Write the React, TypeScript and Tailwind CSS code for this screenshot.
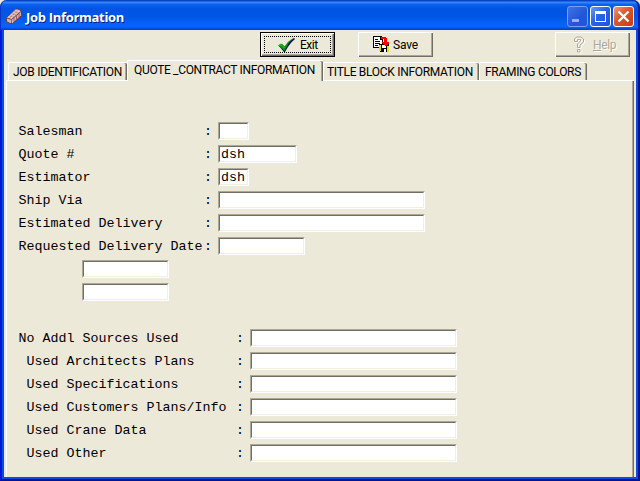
import React from "react";

const bevel =
  "bg-[#ece9d8] shadow-[inset_1px_1px_0_#fff,inset_-1px_-1px_0_#716f64,inset_-2px_-2px_0_#aca899]";

function Field({ width, value = "" }: { width: string; value?: string }) {
  return (
    <div
      className={`${width} h-[18px] shrink-0 border border-t-[#aca899] border-l-[#aca899] border-r-white border-b-white`}
    >
      <div className="h-full border border-t-[#716f64] border-l-[#716f64] border-r-[#f1efe2] border-b-[#f1efe2] bg-white pl-px leading-[15px] whitespace-pre">
        {value}
      </div>
    </div>
  );
}

function Row({ label, labelWidth, width, value }: { label: string; labelWidth: string; width: string; value?: string }) {
  return (
    <div className="flex h-[23px] items-start">
      <div className={`flex ${labelWidth} shrink-0 justify-between pr-[6px] pl-[0.5px] leading-[19px] whitespace-pre`}>
        <span>{label}</span>
        <span>:</span>
      </div>
      <Field width={width} value={value} />
    </div>
  );
}

function Brick() {
  return (
    <svg width="17" height="17" viewBox="0 0 17 17">
      <path d="M.5 9.5L9.5 1H12L15.5 3V7.5L6.5 15.5H4L.5 13.5Z" fill="#cdb6b4" stroke="#6d3a3c" />
      <path d="M1 10L5.5 11.5L15 3.5" stroke="#8c3a3a" fill="none" />
      <path d="M5.5 11.5V15M8 9.5V13.5M10.5 7.5V11.5M13 5.5V9.5M3.5 7.5L7.5 9M6 5.5L10 7M8.5 3.5L12.5 5" stroke="#a0504f" strokeWidth=".9" fill="none" />
      <path d="M2.5 9.2L11 1.9M4.8 10L13.5 2.6" stroke="#eadcda" strokeWidth=".8" fill="none" />
    </svg>
  );
}

function Check() {
  return (
    <svg width="17" height="16" viewBox="0 0 17 16">
      <path d="M1 9L4 7L7 10Q10 5 16 1L17 2Q11 7 7 15H6Z" fill="#000060" />
      <path d="M0 8.5L3 6.5L6.5 9.5Q10 4 15.5 .5Q10 6 6.5 14Z" fill="#009a00" />
      <path d="M1.5 8.5L3 7.5L6.5 11" stroke="#35d435" fill="none" />
    </svg>
  );
}

function SaveIcon() {
  return (
    <svg width="17" height="17" viewBox="0 0 17 17" shapeRendering="crispEdges">
      <path d="M0 0H8L10 2V12H0Z" fill="#000" />
      <path d="M1 1H7V4H9V11H1Z" fill="#fff" />
      <path d="M2 3H5M2 5H7M2 7H7M2 9H5" transform="translate(0 .5)" stroke="#000" />
      <path d="M6 8H16V16H7L6 15Z" fill="#000" />
      <path d="M6 9H8V15H6ZM14 10H16V16H14Z" fill="#e8d820" />
      <path d="M9 9H13V12H9ZM11 13H13V16H11Z" fill="#fff" />
      <path d="M8 1H12L14 3V6H16V7L13 10H12L9 7V6H11V4L10 3H8Z" fill="#f00" />
    </svg>
  );
}

function HelpIcon() {
  return (
    <svg width="13" height="18" viewBox="0 0 13 18" fill="none">
      <g transform="translate(1 1)" stroke="#fff">
        <path d="M1.5 5V3L3.5 1H8L10.5 3V6L7 9V11.5H4.5V8L7.5 5V3.5H4.5V5.5H1.5ZM4.5 13.5H7V16H4.5Z" />
      </g>
      <path d="M1.5 5V3L3.5 1H8L10.5 3V6L7 9V11.5H4.5V8L7.5 5V3.5H4.5V5.5H1.5ZM4.5 13.5H7V16H4.5Z" stroke="#aca899" />
    </svg>
  );
}

function CaptionButton({ kind }: { kind: "min" | "max" | "close" }) {
  const look = {
    min: "border-[#7f9df0] bg-[linear-gradient(135deg,#3f74e6,#2055d8_60%,#2458d6)]",
    max: "border-white bg-[linear-gradient(135deg,#6b9af5,#2764e6_45%,#1b54dc)]",
    close: "border-white bg-[linear-gradient(135deg,#f0987c,#e0532c_45%,#cc3a12)]",
  }[kind];
  return (
    <div className={`h-[21px] w-[21px] rounded-[3px] border ${look}`}>
      <svg width="19" height="19" viewBox="0 0 19 19" fill="none" className="block">
        {kind === "min" && <path d="M4 12H11V15H4Z" fill="#95aff0" />}
        {kind === "max" && <path d="M4 4H15V15H4ZM5 7V14H14V7Z" fill="#fff" fillRule="evenodd" />}
        {kind === "close" && <path d="M4.5 4.5L14.5 14.5M14.5 4.5L4.5 14.5" stroke="#fff" strokeWidth="2.3" />}
      </svg>
    </div>
  );
}

function Tab({ label, width, text }: { label: string; width: string; text: string }) {
  return (
    <div
      className={`${width} h-[18px] shrink-0 rounded-t-[2px] border-t border-l border-white bg-[#ece9d8] leading-[18px] whitespace-nowrap shadow-[inset_-1px_0_0_#716f64,inset_-2px_0_0_#aca899]`}
    >
      <span className={text}>{label}</span>
    </div>
  );
}

export default function App() {
  return (
    <div className="flex h-[481px] w-[640px] flex-col overflow-hidden bg-[#ece9d8] font-['Roboto','Liberation_Sans',sans-serif] text-[12px] text-black">
      <header className="flex h-[30px] shrink-0 items-center rounded-t-[7px] bg-[linear-gradient(180deg,#0842c4_0,#0842c4_3%,#3a8bfa_7%,#0b62ee_15%,#0054e3_28%,#0055e5_55%,#0563fa_80%,#0363fb_90%,#0049d2_97%,#003dc0_100%)] pt-[2px] pr-[6px] pl-[6px] shadow-[inset_1px_0_0_#0831c6,inset_-2px_0_0_#0021a8]">
        <Brick />
        <span className="ml-[3px] w-[400px] pt-[2px] font-['Open_Sans','Noto_Sans',sans-serif] text-[13px] leading-[20px] font-bold tracking-[-0.3px] text-white [text-shadow:1px_1px_0_#0a1f80]">
          Job Information
        </span>
        <div className="ml-auto flex gap-[2px] pt-[1px]">
          <CaptionButton kind="min" />
          <CaptionButton kind="max" />
          <CaptionButton kind="close" />
        </div>
      </header>

      <div className="h-[451px] border-x-2 border-b-2 border-l-[#0019cf] border-r-[#00138c] border-b-[#00138c]">
        <div className="flex h-full flex-col border-x-2 border-b-2 border-[#0a4be6]">
          <div className="flex h-[30px] shrink-0 pt-[2px] text-[12px]">
            <button className="ml-[256px] h-[25px] w-[75px] bg-black p-px">
              <div className={`h-full w-full p-[3px] ${bevel}`}>
                <div className="flex h-full items-center border border-dotted border-black pl-[13px]">
                  <Check />
                  <span className="ml-[5px] tracking-[-0.5px]">Exit</span>
                </div>
              </div>
            </button>
            <button className={`ml-[23px] flex h-[25px] w-[75px] items-center pl-[15px] ${bevel}`}>
              <SaveIcon />
              <span className="ml-[3px] tracking-[-0.2px]">Save</span>
            </button>
            <button className={`ml-[122px] flex h-[25px] w-[75px] items-center pl-[18px] text-[#aca899] [text-shadow:1px_1px_0_#fff] ${bevel}`}>
              <HelpIcon />
              <span className="ml-[7px] tracking-[-0.4px]">
                <u>H</u>elp
              </span>
            </button>
          </div>

          <nav className="flex h-[20px] shrink-0 items-end pl-[4px]">
            <Tab label="JOB IDENTIFICATION" width="w-[119px]" text="pl-[4px] tracking-[-0.28px]" />
            <div className="z-10 -mb-px h-[21px] w-[196px] shrink-0 rounded-t-[2px] border-t border-l border-white bg-[#ece9d8] pl-[6px] leading-[19px] tracking-[-0.33px] whitespace-nowrap shadow-[inset_-1px_0_0_#716f64,inset_-2px_0_0_#aca899]">
              QUOTE _CONTRACT INFORMATION
            </div>
            <Tab label="TITLE BLOCK INFORMATION" width="w-[156px]" text="pl-[3px] tracking-[-0.3px]" />
            <Tab label="FRAMING COLORS" width="w-[108px]" text="pl-[5px] tracking-[-0.3px]" />
          </nav>

          <main className="mr-[2px] ml-[2px] flex-1 border-t border-l border-white pt-[41px] pl-[11px] font-['Liberation_Mono',monospace] text-[13.333px] shadow-[inset_-1px_0_0_#716f64,inset_-2px_0_0_#aca899]">
            <Row label="Salesman" labelWidth="w-[200px]" width="w-[31px]" />
            <Row label="Quote #" labelWidth="w-[200px]" width="w-[79px]" value="dsh" />
            <Row label="Estimator" labelWidth="w-[200px]" width="w-[31px]" value="dsh" />
            <Row label="Ship Via" labelWidth="w-[200px]" width="w-[207px]" />
            <Row label="Estimated Delivery" labelWidth="w-[200px]" width="w-[207px]" />
            <Row label="Requested Delivery Date" labelWidth="w-[200px]" width="w-[87px]" />
            <div className="flex flex-col gap-[5px] pl-[64px]">
              <Field width="w-[87px]" />
              <Field width="w-[87px]" />
            </div>
            <div className="mt-[28px]">
              <Row label="No Addl Sources Used" labelWidth="w-[232px]" width="w-[207px]" />
              <Row label=" Used Architects Plans" labelWidth="w-[232px]" width="w-[207px]" />
              <Row label=" Used Specifications" labelWidth="w-[232px]" width="w-[207px]" />
              <Row label=" Used Customers Plans/Info" labelWidth="w-[232px]" width="w-[207px]" />
              <Row label=" Used Crane Data" labelWidth="w-[232px]" width="w-[207px]" />
              <Row label=" Used Other" labelWidth="w-[232px]" width="w-[207px]" />
            </div>
          </main>
        </div>
      </div>
    </div>
  );
}
